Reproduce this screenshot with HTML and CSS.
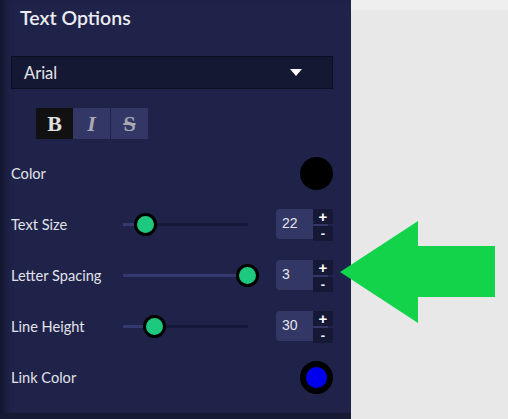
FILE: index.html
```html
<!DOCTYPE html>
<html>
<head>
<meta charset="utf-8">
<link rel="stylesheet" href="styles.css">
</head>
<body>
<div class="app">
  <aside class="panel">
    <h1 class="title">Text Options</h1>
    <div class="select">
      <span class="select-value">Arial</span>
      <span class="caret"></span>
    </div>
    <div class="styles">
      <button class="style-btn bold active">B</button>
      <button class="style-btn italic">I</button>
      <button class="style-btn strike">S</button>
    </div>
    <div class="rows">
      <div class="row">
        <span class="label">Color</span>
        <span class="swatch black"></span>
      </div>
      <div class="row">
        <span class="label">Text Size</span>
        <div class="slider"><div class="fill" style="width:22px"></div><div class="thumb" style="left:11px"></div></div>
        <div class="stepper">
          <div class="num">22</div>
          <div class="btns"><span class="sbtn">+</span><span class="sbtn minus">-</span></div>
        </div>
      </div>
      <div class="row">
        <span class="label">Letter Spacing</span>
        <div class="slider"><div class="fill" style="width:125px"></div><div class="thumb" style="left:113px"></div></div>
        <div class="stepper">
          <div class="num">3</div>
          <div class="btns"><span class="sbtn">+</span><span class="sbtn minus">-</span></div>
        </div>
      </div>
      <div class="row">
        <span class="label">Line Height</span>
        <div class="slider"><div class="fill" style="width:32px"></div><div class="thumb" style="left:20px"></div></div>
        <div class="stepper">
          <div class="num">30</div>
          <div class="btns"><span class="sbtn">+</span><span class="sbtn minus">-</span></div>
        </div>
      </div>
      <div class="row">
        <span class="label">Link Color</span>
        <span class="swatch link"></span>
      </div>
    </div>
    <div class="panel-foot"></div>
  </aside>
  <main class="canvas">
    <div class="canvas-top"></div>
  </main>
  <svg class="arrow" width="155" height="102" viewBox="0 0 155 102">
    <polygon points="0,51 78,0 78,25 155,25 155,76 78,76 78,102" fill="#12d34a"/>
  </svg>
</div>
</body>
</html>
```

FILE: styles.css
```css
* { box-sizing: border-box; }
html, body { margin: 0; padding: 0; }
body {
  width: 508px;
  height: 419px;
  overflow: hidden;
  font-family: Lato, "Noto Sans", sans-serif;
  background: #e8e8e8;
}
.app {
  position: relative;
  display: flex;
  width: 508px;
  height: 419px;
}
.panel {
  width: 351px;
  height: 419px;
  background: #1f2349;
  display: flex;
  flex-direction: column;
  padding: 0 18px 0 11px;
  box-shadow: inset 9px 0 8px -5px rgba(0, 0, 0, 0.45);
  position: relative;
}
.title {
  margin: 0 0 0 9px;
  font-size: 19.5px;
  font-weight: 600;
  line-height: 36px;
  color: #ececf2;
}
.select {
  margin-top: 20px;
  height: 33px;
  background: #151833;
  border: 1px solid #0c0e22;
  display: flex;
  align-items: center;
  padding: 0 30px 0 12px;
}
.select-value {
  font-size: 16.5px;
  color: #e4e4ea;
  flex: 1;
}
.caret {
  width: 0;
  height: 0;
  border-left: 6px solid transparent;
  border-right: 6px solid transparent;
  border-top: 7px solid #ffffff;
}
.styles {
  margin: 19px 0 0 25px;
  display: flex;
}
.style-btn {
  width: 37px;
  height: 31px;
  border: 0;
  padding: 0;
  margin: 0;
  background: #323766;
  font-family: "Liberation Serif", "DejaVu Serif", serif;
  font-size: 22px;
  font-weight: 700;
  color: #a9a9b4;
  line-height: 31px;
}
.style-btn.active { background: #111111; color: #e0e0e0; }
.style-btn.italic { font-style: italic; }
.style-btn.strike { text-decoration: line-through; margin-left: 1px; }
.rows {
  margin-top: 9px;
  display: flex;
  flex-direction: column;
}
.row {
  height: 51px;
  display: flex;
  align-items: center;
}
.label {
  width: 112px;
  font-size: 14.6px;
  color: #e2e2ea;
}
.slider {
  position: relative;
  width: 125px;
  height: 3px;
  background: #151838;
}
.fill {
  height: 3px;
  background: #343a70;
}
.thumb {
  position: absolute;
  top: -10px;
  width: 23px;
  height: 23px;
  border-radius: 50%;
  background: #1dc87f;
  border: 3px solid #000;
}
.stepper {
  margin-left: auto;
  width: 57px;
  height: 32px;
  display: flex;
  align-items: flex-start;
}
.num {
  width: 37px;
  height: 30px;
  background: #323766;
  border-radius: 4px 0 0 4px;
  font-family: "Liberation Sans", Arial, sans-serif;
  font-size: 14px;
  color: #e6e6ee;
  line-height: 29px;
  padding-left: 6px;
}
.btns {
  width: 20px;
  height: 32px;
  display: flex;
  flex-direction: column;
  gap: 2px;
  background: linear-gradient(to right, #323766 15px, transparent 15px) 0 15px / 100% 2px no-repeat;
}
.sbtn {
  height: 15px;
  background: #161936;
  color: #ffffff;
  font-family: "Liberation Sans", Arial, sans-serif;
  font-size: 15px;
  font-weight: 700;
  line-height: 15px;
  text-align: center;
}
.sbtn.minus { font-size: 13px; line-height: 15px; }
.swatch {
  margin-left: auto;
  width: 33px;
  height: 33px;
  border-radius: 50%;
  background: #000;
}
.swatch.link {
  background: #0000ee;
  border: 6px solid #000;
}
.panel-foot {
  margin: auto -18px 0 -11px;
  height: 6px;
  background: #161a33;
}
.canvas {
  flex: 1;
  background: #e8e8e8;
}
.canvas-top {
  height: 10px;
  background: #efefef;
}
.arrow {
  position: absolute;
  left: 340px;
  top: 221px;
}
```
